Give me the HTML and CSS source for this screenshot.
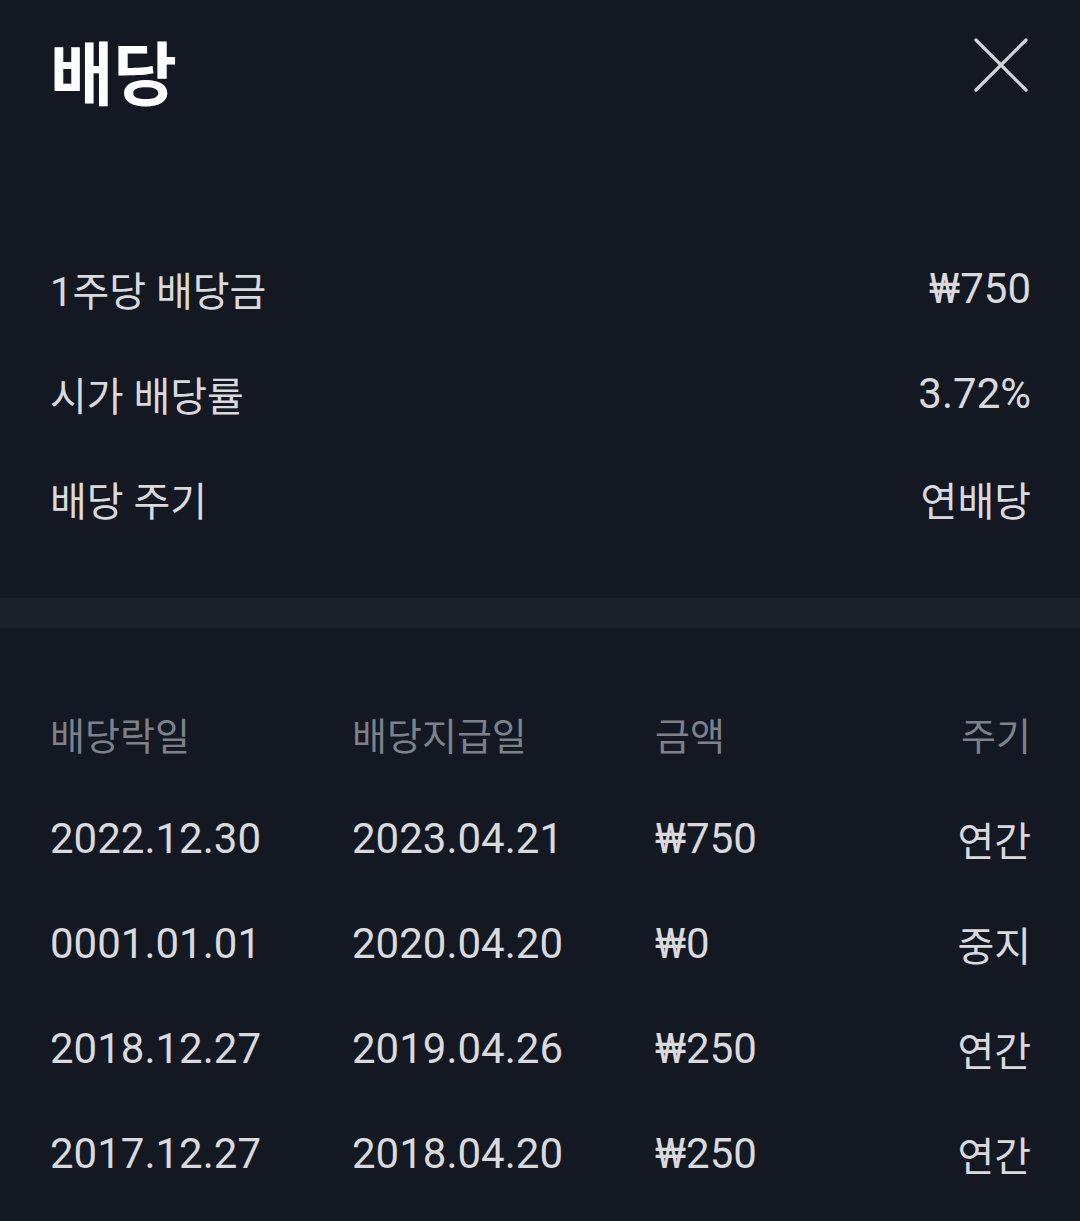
FILE: index.html
```html
<!DOCTYPE html>
<html lang="ko">

<head>
    <meta charset="UTF-8">
    <title>배당</title>
    <link rel="stylesheet" href="styles.css">
</head>

<body>
    <div class="cabecera">
        <h1>배당</h1>
        <a class="cerrar">
            <svg width="56" height="56" viewBox="0 0 56 56">
                <path d="M3 3 L53 53 M53 3 L3 53" stroke="#d2d2d8" stroke-width="3.2" stroke-linecap="round" fill="none" />
            </svg>
        </a>
    </div>

    <div class="resumen">
        <div class="fila">
            <span>1주당 배당금</span>
            <span class="num">₩750</span>
        </div>
        <div class="fila">
            <span>시가 배당률</span>
            <span class="num">3.72%</span>
        </div>
        <div class="fila">
            <span>배당 주기</span>
            <span>연배당</span>
        </div>
    </div>

    <div class="separador"></div>

    <div class="tabla">
        <div class="encabezado">
            <span>배당락일</span>
            <span>배당지급일</span>
            <span>금액</span>
            <span class="der">주기</span>
        </div>
        <div class="registro">
            <span class="num">2022.12.30</span>
            <span class="num">2023.04.21</span>
            <span class="num">₩750</span>
            <span class="der">연간</span>
        </div>
        <div class="registro">
            <span class="num">0001.01.01</span>
            <span class="num">2020.04.20</span>
            <span class="num">₩0</span>
            <span class="der">중지</span>
        </div>
        <div class="registro">
            <span class="num">2018.12.27</span>
            <span class="num">2019.04.26</span>
            <span class="num">₩250</span>
            <span class="der">연간</span>
        </div>
        <div class="registro">
            <span class="num">2017.12.27</span>
            <span class="num">2018.04.20</span>
            <span class="num">₩250</span>
            <span class="der">연간</span>
        </div>
    </div>
</body>

</html>
```

FILE: styles.css
```css
body {
    margin: 0;
    background-color: #131823;
    color: #d9d9de;
    font-family: Roboto, "Noto Sans CJK KR", sans-serif;
    font-size: 40px;
    overflow: hidden;
}

.cabecera {
    display: flex;
    justify-content: space-between;
    align-items: flex-start;
    padding: 26px 50px 0 50px;
    height: 114px;
}

h1 {
    margin: 0;
    font-family: "Noto Sans CJK KR", sans-serif;
    font-size: 69px;
    font-weight: 700;
    line-height: 88px;
    color: #ffffff;
}

.cerrar {
    display: block;
    margin-top: 11px;
    margin-right: 1px;
    cursor: pointer;
}

.cerrar svg {
    display: block;
}

.resumen {
    padding: 96px 49px 47px 50px;
}

.fila {
    display: flex;
    justify-content: space-between;
    align-items: center;
    height: 105px;
}

.num {
    font-size: 42px;
}

.separador {
    height: 30px;
    background-color: #1c202b;
}

.tabla {
    padding: 53px 49px 0 50px;
}

.encabezado,
.registro {
    display: grid;
    grid-template-columns: 302px 303px 1fr auto;
    align-items: center;
    height: 105px;
}

.encabezado {
    font-size: 38px;
    color: #7d818a;
}

.der {
    text-align: right;
}
```
